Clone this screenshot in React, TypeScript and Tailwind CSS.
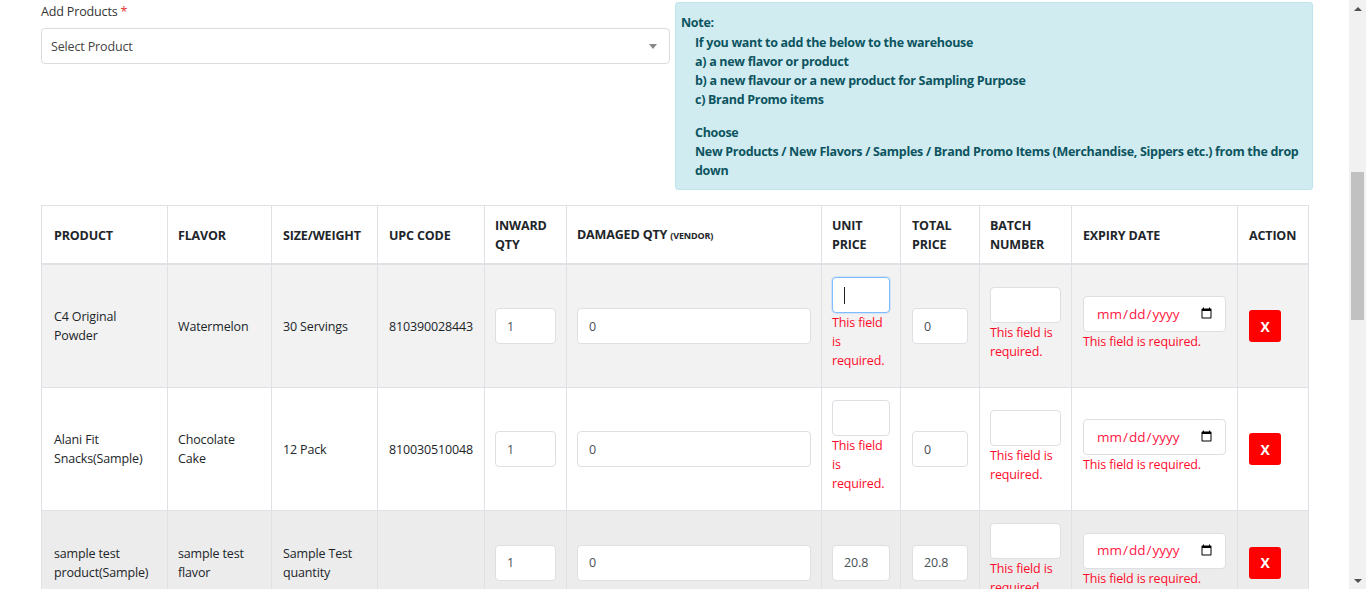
import React from 'react';

interface Row {
  product: string;
  flavor: string;
  size: string;
  upc: string;
  inward: string;
  damaged: string;
  unitPrice: string;
  unitFocused?: boolean;
  unitError: boolean;
  totalPrice: string;
  bg: string;
}

const rows: Row[] = [
  {
    product: 'C4 Original Powder',
    flavor: 'Watermelon',
    size: '30 Servings',
    upc: '810390028443',
    inward: '1',
    damaged: '0',
    unitPrice: '',
    unitFocused: true,
    unitError: true,
    totalPrice: '0',
    bg: 'bg-[#f2f2f2]',
  },
  {
    product: 'Alani Fit Snacks(Sample)',
    flavor: 'Chocolate Cake',
    size: '12 Pack',
    upc: '810030510048',
    inward: '1',
    damaged: '0',
    unitPrice: '',
    unitError: true,
    totalPrice: '0',
    bg: 'bg-white',
  },
  {
    product: 'sample test product(Sample)',
    flavor: 'sample test flavor',
    size: 'Sample Test quantity',
    upc: '',
    inward: '1',
    damaged: '0',
    unitPrice: '20.8',
    unitError: false,
    totalPrice: '20.8',
    bg: 'bg-[#ececec]',
  },
];

const colWidths = ['w-[126px]', 'w-[104px]', 'w-[106px]', 'w-[107px]', 'w-[82px]', 'w-[255px]', 'w-[79px]', 'w-[79px]', 'w-[92px]', 'w-[166px]', 'w-[71px]'];

const inputCls =
  'block h-[36px] w-full rounded-[4px] border border-[#dcdfe3] bg-white px-[11px] text-[#495057] outline-none';

const thCls = 'border border-b-2 border-[#dee2e6] pt-[10px] pb-[9px] align-middle';

const ErrorText = () => <div className="mb-[5px] text-[#ff0a2a]">This field is required.</div>;

const App = () => {
  return (
    <div className="flex h-[589px] overflow-hidden bg-white font-['Open_Sans','Noto_Sans',sans-serif] text-[12.5px] leading-[19px] tracking-[-0.15px] text-[#212529]">
      <main className="min-w-0 flex-1 px-[41px]">
        {/* top: product select + note */}
        <div className="-mr-[5px] flex gap-[5px]">
          <div className="w-[629px] shrink-0 pt-[2px]">
            <label className="block text-[#333]">
              Add Products <span className="text-[#e3342f]">*</span>
            </label>
            <div className="mt-[7px] flex h-[36px] items-center justify-between rounded-[4px] border border-[#dcdcdc] bg-white pl-[9px] pr-[12px] text-[#444]">
              <span>Select Product</span>
              <span className="h-0 w-0 border-x-[4px] border-t-[5px] border-x-transparent border-t-[#888]" />
            </div>
          </div>

          <div className="mt-[2px] h-[188px] flex-1 rounded-[3px] border border-[#bee5eb] bg-[#d1ecf1] px-[5px] pt-[10px] font-bold tracking-[-0.3px] text-[#0c5460]">
            <div className="mb-[1px]">Note:</div>
            <div className="pl-[14px]">
              <div>If you want to add the below to the warehouse</div>
              <div>a) a new flavor or product</div>
              <div>b) a new flavour or a new product for Sampling Purpose</div>
              <div>c) Brand Promo items</div>
              <div className="mt-[14px]">Choose</div>
              <div>
                <span className="whitespace-nowrap">
                  New Products / New Flavors / Samples / Brand Promo Items (Merchandise, Sippers etc.) from the drop
                </span>
                <br />
                down
              </div>
            </div>
          </div>
        </div>

        {/* products table */}
        <table className="mt-[15px] w-[1267px] table-fixed border-collapse">
          <colgroup>
            {colWidths.map((w, i) => (
              <col key={i} className={w} />
            ))}
          </colgroup>
          <thead>
            <tr className="text-left font-bold uppercase text-[#212529]">
              <th className={`${thCls} px-[12px]`}>Product</th>
              <th className={`${thCls} px-[10px]`}>Flavor</th>
              <th className={`${thCls} px-[11px]`}>Size/Weight</th>
              <th className={`${thCls} px-[11px]`}>UPC Code</th>
              <th className={`${thCls} px-[10px]`}>Inward Qty</th>
              <th className={`${thCls} px-[10px]`}>
                Damaged Qty <span className="text-[9px]">(Vendor)</span>
              </th>
              <th className={`${thCls} px-[10px]`}>Unit Price</th>
              <th className={`${thCls} px-[11px]`}>Total Price</th>
              <th className={`${thCls} px-[10px]`}>Batch Number</th>
              <th className={`${thCls} px-[11px]`}>Expiry Date</th>
              <th className={`${thCls} px-[11px]`}>Action</th>
            </tr>
          </thead>
          <tbody>
            {rows.map((row) => (
              <tr key={row.product} className={row.bg}>
                <td className="border border-[#dee2e6] px-[12px] py-[12px] align-middle">{row.product}</td>
                <td className="border border-[#dee2e6] px-[10px] py-[12px] align-middle">{row.flavor}</td>
                <td className="border border-[#dee2e6] px-[11px] py-[12px] align-middle">{row.size}</td>
                <td className="whitespace-nowrap border border-[#dee2e6] px-[11px] py-[12px] align-middle">{row.upc}</td>
                <td className="border border-[#dee2e6] px-[10px] py-[12px] align-middle">
                  <input className={inputCls} value={row.inward} readOnly />
                </td>
                <td className="border border-[#dee2e6] px-[10px] py-[12px] align-middle">
                  <input className={inputCls} value={row.damaged} readOnly />
                </td>
                <td className="border border-[#dee2e6] px-[10px] py-[12px] align-middle">
                  {row.unitFocused ? (
                    <div className="flex h-[36px] w-full items-center rounded-[4px] border border-[#80bdff] bg-white px-[11px] shadow-[0_0_0_1px_rgba(0,123,255,0.12)]">
                      <span className="h-[17px] w-px bg-[#222]" />
                    </div>
                  ) : (
                    <input className={inputCls} value={row.unitPrice} readOnly />
                  )}
                  {row.unitError && <ErrorText />}
                </td>
                <td className="border border-[#dee2e6] px-[11px] py-[12px] align-middle">
                  <input className={inputCls} value={row.totalPrice} readOnly />
                </td>
                <td className="border border-[#dee2e6] px-[10px] py-[12px] align-middle">
                  <input className={inputCls} value="" readOnly />
                  <ErrorText />
                </td>
                <td className="border border-[#dee2e6] px-[11px] py-[12px] align-middle">
                  <input
                    type="date"
                    className="block h-[36px] w-full rounded-[4px] border border-[#dcdfe3] bg-white pl-[12px] pr-[10px] text-[13.5px] tracking-normal text-[#ff1744] outline-none"
                  />
                  <ErrorText />
                </td>
                <td className="border border-[#dee2e6] px-[11px] py-[12px] align-middle">
                  <button className="flex h-[32px] w-[32px] items-center justify-center rounded-[3px] bg-[#ff0000] text-[14px] font-bold text-white">
                    X
                  </button>
                </td>
              </tr>
            ))}
          </tbody>
        </table>
      </main>

      {/* page scrollbar */}
      <aside className="flex w-[17px] shrink-0 flex-col items-center bg-[#f1f1f1]">
        <div className="flex h-[17px] items-center">
          <span className="h-0 w-0 border-x-[4px] border-b-[4px] border-x-transparent border-b-[#505050]" />
        </div>
        <div className="h-[155px]" />
        <div className="h-[148px] w-[13px] bg-[#c1c1c1]" />
        <div className="flex-1" />
        <div className="flex h-[17px] items-center">
          <span className="h-0 w-0 border-x-[4px] border-t-[4px] border-x-transparent border-t-[#505050]" />
        </div>
      </aside>
    </div>
  );
};

export default App;
